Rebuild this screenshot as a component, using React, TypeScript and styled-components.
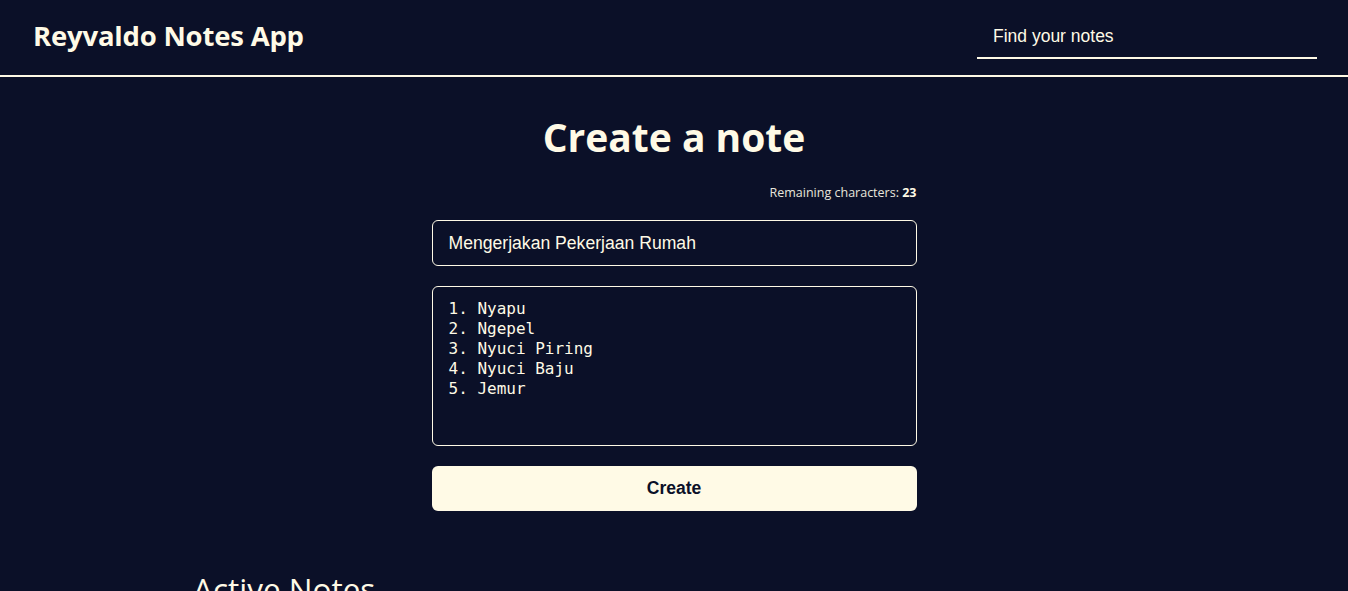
import React, { useState } from "react";
import styled, { createGlobalStyle } from "styled-components";

const BG = "#0b1028";
const CREAM = "#fffae6";

const Global = createGlobalStyle`
  * { box-sizing: border-box; }
  html, body { margin: 0; padding: 0; background: ${BG}; }
  body { font-family: "Open Sans", "Noto Sans", sans-serif; color: ${CREAM}; }
`;

const Header = styled.header`
  display: flex;
  align-items: center;
  justify-content: space-between;
  height: 77px;
  padding: 0 31px 0 33px;
  border-bottom: 2px solid ${CREAM};
`;

const Brand = styled.h1`
  margin: 0 0 4px;
  font-family: "Open Sans", sans-serif;
  font-weight: 700;
  font-size: 27.5px;
  letter-spacing: -0.2px;
  color: ${CREAM};
`;

const Search = styled.input`
  width: 340px;
  height: 46px;
  margin-bottom: 4px;
  background: transparent;
  border: none;
  border-bottom: 2px solid ${CREAM};
  padding: 4px 16px 0;
  color: ${CREAM};
  font-family: "Liberation Sans", Arial, sans-serif;
  font-size: 17.5px;
  outline: none;
  &::placeholder { color: ${CREAM}; opacity: 1; }
`;

const Main = styled.main`
  width: 962px;
  margin: 0 auto;
  padding-top: 34px;
`;

const FormSection = styled.section`
  width: 485px;
  margin: 0 auto;
  display: flex;
  flex-direction: column;
`;

const Title = styled.h2`
  margin: 0 0 21px;
  text-align: center;
  font-family: "Open Sans", sans-serif;
  font-weight: 700;
  font-size: 39px;
  line-height: 52px;
  color: ${CREAM};
`;

const Counter = styled.p`
  margin: 0 0 19px;
  text-align: right;
  font-family: "Open Sans", sans-serif;
  font-size: 12.5px;
  line-height: 17px;
  color: #e8e6dc;
  b { color: ${CREAM}; font-weight: 700; }
`;

const Field = styled.input`
  height: 46px;
  margin-bottom: 20px;
  border: 1px solid ${CREAM};
  border-radius: 6px;
  background: transparent;
  padding: 0 16px;
  color: ${CREAM};
  font-family: "Liberation Sans", Arial, sans-serif;
  font-size: 17.6px;
  outline: none;
`;

const Area = styled.textarea`
  height: 160px;
  margin-bottom: 20px;
  border: 1px solid ${CREAM};
  border-radius: 6px;
  background: transparent;
  padding: 12px 16px;
  color: ${CREAM};
  font-family: "DejaVu Sans Mono", monospace;
  font-size: 16px;
  line-height: 20px;
  resize: none;
  outline: none;
`;

const Button = styled.button`
  height: 45px;
  border: none;
  border-radius: 6px;
  background: ${CREAM};
  color: ${BG};
  font-family: "Liberation Sans", Arial, sans-serif;
  font-weight: 700;
  font-size: 17.5px;
  cursor: pointer;
`;

const ListTitle = styled.h2`
  margin: 56px 0 0;
  font-family: "Open Sans", sans-serif;
  font-weight: 400;
  font-size: 31.5px;
  color: ${CREAM};
`;

export default function App() {
  const [title, setTitle] = useState("Mengerjakan Pekerjaan Rumah");
  const [body, setBody] = useState("1. Nyapu\n2. Ngepel\n3. Nyuci Piring\n4. Nyuci Baju\n5. Jemur");
  return (
    <>
      <Global />
      <Header>
        <Brand>Reyvaldo Notes App</Brand>
        <Search placeholder="Find your notes" />
      </Header>
      <Main>
        <FormSection>
          <Title>Create a note</Title>
          <Counter>
            Remaining characters: <b>{50 - title.length}</b>
          </Counter>
          <Field value={title} onChange={(e) => setTitle(e.target.value.slice(0, 50))} />
          <Area value={body} onChange={(e) => setBody(e.target.value)} />
          <Button>Create</Button>
        </FormSection>
        <ListTitle>Active Notes</ListTitle>
      </Main>
    </>
  );
}
